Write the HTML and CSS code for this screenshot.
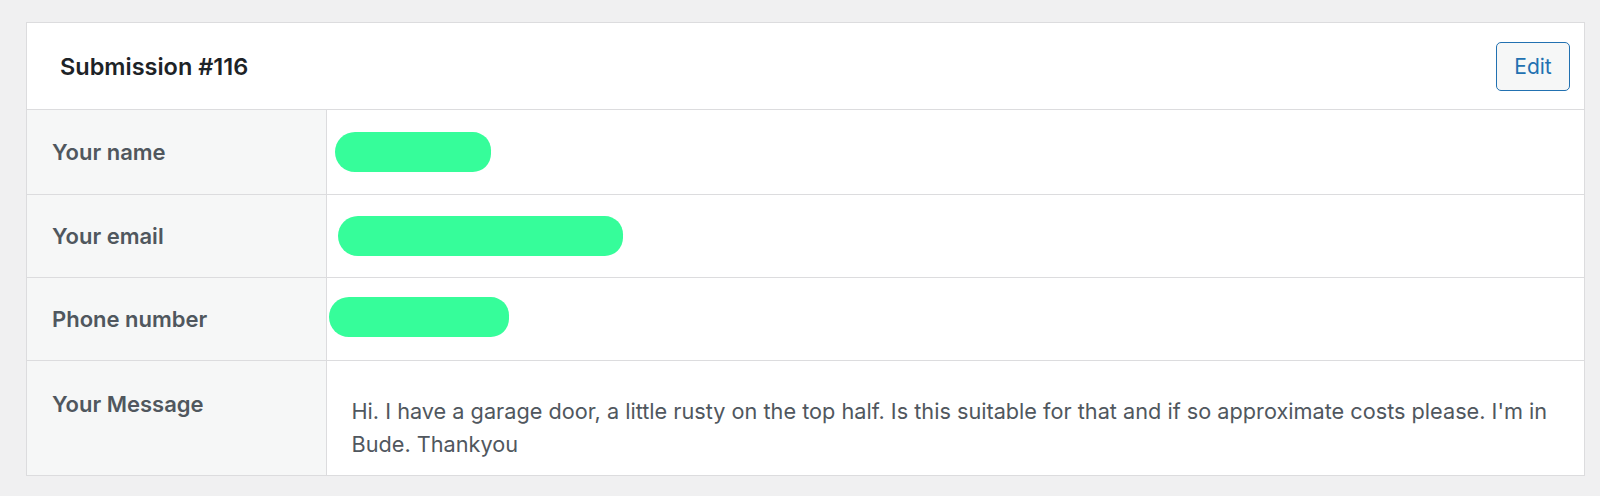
FILE: index.html
```html
<!DOCTYPE html>
<html>
<head>
    <meta charset="utf-8">
    <title>Submission #116</title>
    <link rel="stylesheet" href="styles.css">
</head>
<body>
    <div class="card">
        <div class="card-header">
            <h2 class="card-title">Submission #116</h2>
            <a class="button" href="#">Edit</a>
        </div>
        <table class="fields">
            <tr class="field">
                <th>Your name</th>
                <td><span class="redact redact-name"></span></td>
            </tr>
            <tr class="field">
                <th>Your email</th>
                <td><span class="redact redact-email"></span></td>
            </tr>
            <tr class="field">
                <th>Phone number</th>
                <td><span class="redact redact-phone"></span></td>
            </tr>
            <tr class="field field-long">
                <th>Your Message</th>
                <td>Hi. I have a garage door, a little rusty on the top half. Is this suitable for that and if so approximate costs please. I'm in Bude. Thankyou</td>
            </tr>
        </table>
    </div>
</body>
</html>
```

FILE: styles.css
```css
html, body, div, h2, table, tr, th, td, a { margin: 0; padding: 0; border: 0; }
html { box-sizing: border-box; }
*, *:before, *:after { box-sizing: inherit; }

body {
    background: #f0f0f1;
    color: #50575e;
    font-family: Inter, "Liberation Sans", Arial, sans-serif;
    font-size: 21px;
    padding: 22px 15px 0 26px;
}

.card {
    background: #fff;
    border: 1px solid #dcdcde;
}

/* header with title + edit button */
.card-header {
    display: flex;
    align-items: center;
    justify-content: space-between;
    height: 87px;
    padding: 0 14px 0 33px;
    border-bottom: 1px solid #dcdcde;
}

.card-title {
    color: #1d2327;
    font-size: 23.5px;
    font-weight: 600;
}

.button {
    display: inline-flex;
    align-items: center;
    justify-content: center;
    width: 74px;
    height: 49px;
    color: #2271b1;
    background: #f6f7f7;
    border: 1.5px solid #2271b1;
    border-radius: 5px;
    font-size: 21px;
    text-decoration: none;
}

/* field rows */
.fields {
    width: 100%;
    border-collapse: collapse;
}

.field th,
.field td {
    height: 83px;
    border-top: 1px solid #dcdcde;
    text-align: left;
    vertical-align: middle;
}

.field:first-child th,
.field:first-child td {
    border-top: 0;
    height: 84px;
}

.field th {
    width: 299px;
    padding: 0 25px;
    background: #f6f7f7;
    border-right: 1px solid #dcdcde;
    font-weight: 600;
    font-size: 22px;
    color: #50575e;
}

.field td {
    padding: 0 25px 0 0;
    line-height: 33px;
}

.field-long th {
    height: 114px;
    vertical-align: top;
    padding-top: 30px;
}

.field-long td {
    vertical-align: top;
    padding: 34px 28px 14px 25px;
    font-size: 21.7px;
}

/* green marker scribbles over private values */
.redact {
    display: block;
    height: 40px;
    background: #36fd9a;
    border-radius: 22px 20px 20px 22px;
}

.redact-name { width: 156px; margin-left: 8px; }
.redact-email { width: 285px; margin-left: 11px; }
.redact-phone { width: 180px; margin-left: 2px; margin-top: -4px; }
```
